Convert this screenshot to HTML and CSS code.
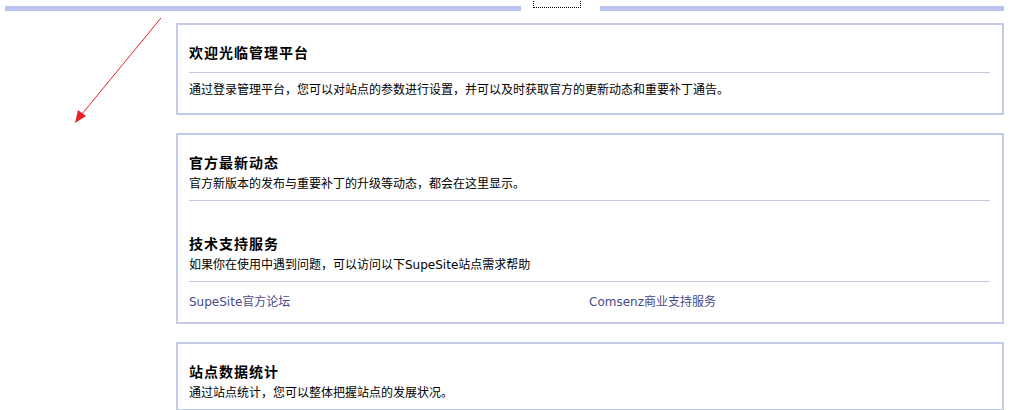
FILE: index.html
```html
<!DOCTYPE html>
<html>
<head>
	<meta charset="utf-8">
	<link rel="stylesheet" href="styles.css">
</head>
<body>
	<div id="topnav">
		<div class="bar"></div>
		<div class="tab"><a href="#" class="focus"></a></div>
		<div class="bar"></div>
	</div>

	<div id="page">
		<div id="side"></div>

		<div id="main">
			<div class="box">
				<h3 class="title">欢迎光临管理平台</h3>
				<p class="intro">通过登录管理平台，您可以对站点的参数进行设置，并可以及时获取官方的更新动态和重要补丁通告。</p>
			</div>

			<div class="box">
				<div class="section">
					<h3>官方最新动态</h3>
					<p>官方新版本的发布与重要补丁的升级等动态，都会在这里显示。</p>
				</div>
				<div class="section second">
					<h3>技术支持服务</h3>
					<p>如果你在使用中遇到问题，可以访问以下SupeSite站点需求帮助</p>
				</div>
				<div class="links">
					<a href="#">SupeSite官方论坛</a>
					<a href="#">Comsenz商业支持服务</a>
				</div>
			</div>

			<div class="box">
				<div class="section last">
					<h3>站点数据统计</h3>
					<p>通过站点统计，您可以整体把握站点的发展状况。</p>
				</div>
			</div>
		</div>
	</div>

	<svg id="pointer" width="180" height="140" viewBox="0 0 180 140">
		<line x1="161" y1="18" x2="82" y2="114" stroke="#e8202a" stroke-width="1"/>
		<polygon points="75,123 78,110 86,116" fill="#e8202a"/>
	</svg>
</body>
</html>
```

FILE: styles.css
```css
body {
	margin: 0;
	background: #fff;
	color: #000;
	font-family: "DejaVu Sans", "Noto Sans CJK SC", sans-serif;
	font-size: 12px;
}

#topnav {
	display: flex;
	margin-left: 5px;
	width: 999px;
	height: 11px;
}

#topnav .bar {
	height: 5px;
	margin-top: 6px;
	background: #bac2ef;
}

#topnav .bar:first-child {
	width: 516px;
}

#topnav .bar:last-child {
	flex: 1;
}

.tab {
	width: 79px;
	position: relative;
}

.tab .focus {
	display: block;
	margin: -2px 0 0 12px;
	width: 46px;
	height: 8px;
	border: 1px dotted #000;
}

#page {
	display: flex;
	margin-top: 12px;
}

#side {
	width: 176px;
	flex: none;
}

#main {
	width: 828px;
}

.box {
	border: 2px solid #c4cae9;
	padding: 0 12px 0 11px;
	margin-bottom: 18px;
}

h3 {
	margin: 0;
	font-family: "Noto Sans CJK SC", sans-serif;
	font-size: 14px;
	letter-spacing: 1px;
	line-height: 20px;
	font-weight: bold;
}

p {
	margin: 0;
	line-height: 20px;
}

.title {
	padding: 17px 0 10px;
	border-bottom: 1px solid #c5cadc;
}

.intro {
	padding: 7px 0 13px;
}

.section {
	padding: 17px 0 6px;
	border-bottom: 1px solid #c5cadc;
}

.section p {
	padding-top: 2px;
}

.section.second {
	padding-top: 32px;
	padding-bottom: 6px;
}

.section.last {
	border-bottom: none;
}

.links {
	display: grid;
	grid-template-columns: 400px 1fr;
	padding: 10px 0 10px;
	line-height: 20px;
}

.links a {
	color: #4a4a88;
	text-decoration: none;
}

#pointer {
	position: absolute;
	left: 0;
	top: 0;
}
```
